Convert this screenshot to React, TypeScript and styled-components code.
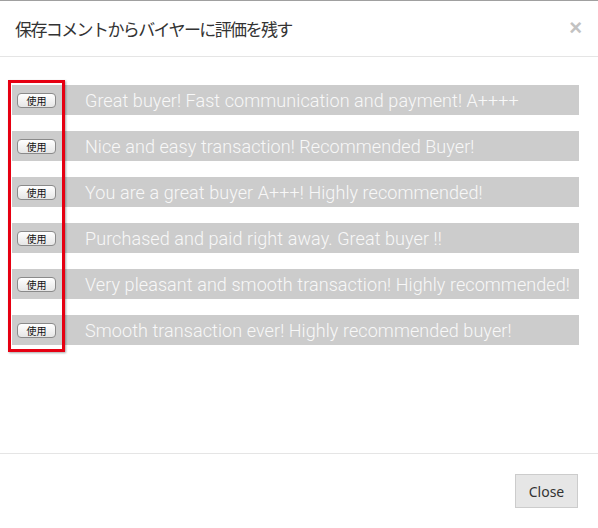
import styled, { createGlobalStyle } from "styled-components";

const GlobalStyle = createGlobalStyle`
    html, body {
        margin: 0;
        padding: 0;
        background: #ffffff;
    }
    * {
        box-sizing: border-box;
    }
`;

const comments = [
    "Great buyer! Fast communication and payment! A++++",
    "Nice and easy transaction! Recommended Buyer!",
    "You are a great buyer A+++! Highly recommended!",
    "Purchased and paid right away. Great buyer !!",
    "Very pleasant and smooth transaction! Highly recommended!",
    "Smooth transaction ever! Highly recommended buyer!",
];

const ModalWrap = styled.div`
    width: 598px;
    height: 528px;
    background: #ffffff;
    border-top: 1px solid #a0a0a0;
    display: flex;
    flex-direction: column;
`;

const ModalHeader = styled.div`
    height: 56px;
    display: flex;
    align-items: center;
    justify-content: space-between;
    padding: 0 16px 0 15px;
    border-bottom: 1px solid #e5e5e5;
`;

const ModalTitle = styled.h4`
    margin: 0;
    font-family: "Noto Sans CJK JP", "Noto Sans", sans-serif;
    font-size: 17px;
    font-weight: 400;
    letter-spacing: -1.6px;
    color: #333333;
`;

const CloseX = styled.span`
    font-family: "Liberation Sans", Arial, sans-serif;
    font-size: 22px;
    font-weight: 700;
    color: #c2c2c2;
    line-height: 1;
    margin-top: -2px;
`;

const ModalBody = styled.div`
    position: relative;
    flex: 1;
    padding: 28px 19px 0 12px;
    border-bottom: 1px solid #e5e5e5;
`;

const CommentList = styled.div`
    display: flex;
    flex-direction: column;
    gap: 16px;
`;

const CommentRow = styled.div`
    height: 30px;
    background: #cccccc;
    display: flex;
    align-items: center;
    padding-left: 5px;
    gap: 29px;
    overflow: hidden;
`;

const UseButton = styled.button`
    flex: none;
    width: 39px;
    height: 15px;
    padding: 0;
    font-family: "Noto Sans CJK JP", sans-serif;
    font-size: 10px;
    line-height: 13px;
    color: #111111;
    background: linear-gradient(#ffffff, #e6e6e6);
    border: 1px solid #8a8a8a;
    border-radius: 4px;
`;

const CommentText = styled.span`
    font-family: Roboto, "Liberation Sans", sans-serif;
    font-weight: 300;
    font-size: 18px;
    letter-spacing: 0.08px;
    color: #f8f8f8;
    white-space: nowrap;
`;

const Highlight = styled.div`
    position: absolute;
    left: 8px;
    top: 23px;
    width: 57px;
    height: 272px;
    border: 3px solid #e60012;
    box-shadow: 1px 1px 2px rgba(0, 0, 0, 0.35);
    pointer-events: none;
`;

const ModalFooter = styled.div`
    height: 74px;
    display: flex;
    justify-content: flex-end;
    align-items: flex-start;
    padding: 20px 20px 0 0;
`;

const CloseButton = styled.button`
    width: 63px;
    height: 34px;
    font-family: "Noto Sans", "Open Sans", sans-serif;
    font-size: 14px;
    color: #333333;
    background: #e6e6e6;
    border: 1px solid #cccccc;
    border-radius: 0;
`;

export default function App() {
    return (
        <ModalWrap>
            <GlobalStyle />
            <ModalHeader>
                <ModalTitle>保存コメントからバイヤーに評価を残す</ModalTitle>
                <CloseX>×</CloseX>
            </ModalHeader>
            <ModalBody>
                <CommentList>
                    {comments.map((c) => (
                        <CommentRow key={c}>
                            <UseButton>使用</UseButton>
                            <CommentText>{c}</CommentText>
                        </CommentRow>
                    ))}
                </CommentList>
                <Highlight />
            </ModalBody>
            <ModalFooter>
                <CloseButton>Close</CloseButton>
            </ModalFooter>
        </ModalWrap>
    );
}
